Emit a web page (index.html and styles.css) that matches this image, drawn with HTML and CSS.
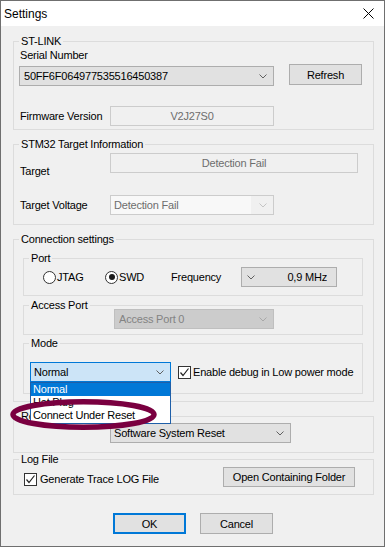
FILE: index.html
```html
<!DOCTYPE html>
<html lang="en">
<head>
  <meta charset="UTF-8">
  <title>Settings</title>
  <link rel="stylesheet" href="styles.css">
</head>
<body>
  <div class="window">
    <div class="titlebar">
      <span class="title">Settings</span>
      <svg class="close" width="11" height="11" viewBox="0 0 11 11"><path d="M0.5 0.5 L10.5 10.5 M10.5 0.5 L0.5 10.5" stroke="#000" stroke-width="1" fill="none"/></svg>
    </div>

    <div class="client">
      <!-- ST-LINK -->
      <fieldset class="group stlink">
        <legend>ST-LINK</legend>
        <div class="label serial-label">Serial Number</div>
        <div class="row serial-row">
          <div class="combo serial-combo">
            <span class="combo-text">50FF6F064977535516450387</span>
            <svg class="chev" width="8" height="5" viewBox="0 0 8 5"><polyline points="0.5,0.5 4,4 7.5,0.5" fill="none" stroke="currentColor"/></svg>
          </div>
          <button class="btn refresh">Refresh</button>
        </div>
        <div class="row fw-row">
          <span class="label field-label">Firmware Version</span>
          <div class="field fw-field">V2J27S0</div>
        </div>
      </fieldset>

      <!-- Target info -->
      <fieldset class="group stm">
        <legend>STM32 Target Information</legend>
        <div class="row target-row">
          <span class="label field-label target-label">Target</span>
          <div class="field target-field">Detection Fail</div>
        </div>
        <div class="row volt-row">
          <span class="label field-label">Target Voltage</span>
          <div class="combo volt-combo">
            <span class="combo-text">Detection Fail</span>
            <svg class="chev" width="8" height="5" viewBox="0 0 8 5"><polyline points="0.5,0.5 4,4 7.5,0.5" fill="none" stroke="currentColor"/></svg>
          </div>
        </div>
      </fieldset>

      <!-- Connection settings -->
      <fieldset class="group conn">
        <legend>Connection settings</legend>

        <fieldset class="group port">
          <legend>Port</legend>
          <div class="row port-row">
            <div class="radio radio-jtag"><span class="circle"></span><span>JTAG</span></div>
            <div class="radio radio-swd"><span class="circle on"></span><span>SWD</span></div>
            <span class="freq-label">Frequency</span>
            <div class="combo freq-combo">
              <svg class="chev" width="8" height="5" viewBox="0 0 8 5"><polyline points="0.5,0.5 4,4 7.5,0.5" fill="none" stroke="currentColor"/></svg>
              <span class="combo-text freq-text">0,9 MHz</span>
            </div>
          </div>
        </fieldset>

        <fieldset class="group access">
          <legend>Access Port</legend>
          <div class="combo access-combo">
            <span class="combo-text">Access Port 0</span>
            <svg class="chev" width="8" height="5" viewBox="0 0 8 5"><polyline points="0.5,0.5 4,4 7.5,0.5" fill="none" stroke="currentColor"/></svg>
          </div>
        </fieldset>

        <fieldset class="group mode">
          <legend>Mode</legend>
          <div class="row mode-row">
            <div class="mode-wrap">
              <div class="combo mode-combo">
                <span class="combo-text">Normal</span>
                <svg class="chev" width="8" height="5" viewBox="0 0 8 5"><polyline points="0.5,0.5 4,4 7.5,0.5" fill="none" stroke="currentColor"/></svg>
              </div>
              <div class="mode-list">
                <div class="item selected">Normal</div>
                <div class="item">Hot Plug</div>
                <div class="item">Connect Under Reset</div>
              </div>
            </div>
            <span class="check mode-check">
              <svg width="11" height="11" viewBox="0 0 11 11"><polyline points="1.5,5.5 4,8.5 9.5,1.5" fill="none" stroke="#222" stroke-width="1.2"/></svg>
            </span>
            <span class="check-text">Enable debug in Low power mode</span>
          </div>
        </fieldset>
      </fieldset>

      <!-- Reset mode -->
      <fieldset class="group reset">
        <legend>Reset mode</legend>
        <div class="combo reset-combo">
          <span class="combo-text">Software System Reset</span>
          <svg class="chev" width="8" height="5" viewBox="0 0 8 5"><polyline points="0.5,0.5 4,4 7.5,0.5" fill="none" stroke="currentColor"/></svg>
        </div>
      </fieldset>

      <!-- Log file -->
      <fieldset class="group log">
        <legend>Log File</legend>
        <div class="row log-row">
          <span class="check log-check">
            <svg width="11" height="11" viewBox="0 0 11 11"><polyline points="1.5,5.5 4,8.5 9.5,1.5" fill="none" stroke="#222" stroke-width="1.2"/></svg>
          </span>
          <span class="check-text log-text">Generate Trace LOG File</span>
          <button class="btn folder">Open Containing Folder</button>
        </div>
      </fieldset>

      <div class="dialog-buttons">
        <button class="btn btn-ok">OK</button>
        <button class="btn btn-cancel">Cancel</button>
      </div>
    </div>

    <!-- annotation ring -->
    <svg class="ring" width="160" height="40" viewBox="0 0 160 40">
      <ellipse cx="75.5" cy="19.5" rx="70.5" ry="12.8" fill="none" stroke="#7a0040" stroke-width="5.5"/>
    </svg>
  </div>
</body>
</html>
```

FILE: styles.css
```css
body {
  margin: 0;
  font-family: "Liberation Sans", Arial, sans-serif;
  font-size: 11px;
  letter-spacing: -0.2px;
  color: #000;
  background: #fff;
}
.window {
  position: relative;
  width: 385px;
  height: 547px;
  box-sizing: border-box;
  border: 1px solid #6f6f6f;
  background: #f0f0f0;
}
.titlebar {
  height: 25px;
  background: #fff;
  display: flex;
  align-items: center;
  padding-left: 3px;
}
.title {
  font-size: 12px;
  letter-spacing: 0;
}
.close {
  margin-left: auto;
  margin-right: 10px;
}
.client {
  padding: 9px 10px 0 12px;
}

/* group boxes */
.group {
  margin: 0;
  padding: 0;
  border: 1px solid #dcdcdc;
  min-width: 0;
}
.group legend {
  margin-left: 5px;
  padding: 0 2px;
  line-height: 13px;
}
.row {
  display: flex;
  align-items: center;
}
.label, .check-text, .freq-label {
  line-height: 13px;
  white-space: nowrap;
}
.field-label {
  width: 90px;
  flex: none;
}

/* controls */
.combo {
  display: flex;
  align-items: center;
  box-sizing: border-box;
  height: 20px;
  border: 1px solid #adadad;
  background: #e1e1e1;
  padding: 0 6px 0 4px;
  color: #606060;
}
.combo-text {
  flex: 1;
  color: #000;
  white-space: nowrap;
  overflow: hidden;
}
.chev {
  flex: none;
}
.field {
  box-sizing: border-box;
  height: 20px;
  border: 1px solid #cccccc;
  background: #f0f0f0;
  color: #6d6d6d;
  text-align: center;
  line-height: 18px;
}
.btn {
  box-sizing: border-box;
  font: inherit;
  letter-spacing: inherit;
  color: #000;
  background: #e1e1e1;
  border: 1px solid #adadad;
  padding: 0;
  height: 20px;
}
.check {
  display: flex;
  align-items: center;
  justify-content: center;
  box-sizing: border-box;
  width: 13px;
  height: 13px;
  border: 1px solid #333;
  background: #fff;
  flex: none;
}

/* ST-LINK */
.stlink {
  padding-bottom: 3px;
}
.serial-label {
  margin: 1px 0 0 6px;
}
.serial-row {
  margin: 4px 0 0 5px;
  align-items: flex-start;
}
.serial-combo {
  width: 255px;
}
.refresh {
  width: 73px;
  height: 21px;
  margin: -2px 0 0 15px;
}
.fw-row {
  margin: 20px 0 0 6px;
}
.fw-field {
  width: 164px;
}

/* target info */
.stm {
  margin-top: 8px;
  padding-bottom: 9px;
}
.target-row {
  margin: 2px 0 0 6px;
  height: 20px;
  align-items: flex-start;
}
.target-label {
  margin-top: 12px;
}
.target-field {
  width: 248px;
}
.volt-row {
  margin: 22px 0 0 6px;
}
.volt-combo {
  width: 164px;
  border-color: #cccccc;
  background: #f0f0f0;
  padding: 0 6px 0 0;
  color: #c4c4c4;
}
.volt-combo .combo-text {
  align-self: stretch;
  line-height: 18px;
  background: #f8f8f8;
  color: #6d6d6d;
  padding-left: 3px;
  margin-right: 8px;
}

/* connection */
.conn {
  margin-top: 8px;
  padding-bottom: 7px;
}
.port {
  margin: 6px 10px 0 9px;
  padding-bottom: 8px;
}
.port-row {
  margin-top: 2px;
  height: 20px;
  padding-left: 19px;
}
.radio {
  display: flex;
  align-items: center;
  flex: none;
}
.radio-jtag {
  width: 62px;
}
.radio-swd {
  width: 66px;
}
.circle {
  display: flex;
  align-items: center;
  justify-content: center;
  box-sizing: border-box;
  width: 13px;
  height: 13px;
  border: 1px solid #333;
  border-radius: 50%;
  background: #fff;
  margin-right: 1px;
}
.circle.on::after {
  content: "";
  width: 6px;
  height: 6px;
  border-radius: 50%;
  background: #1a1a1a;
}
.freq-label {
  width: 70px;
  flex: none;
}
.freq-combo {
  width: 96px;
  padding: 0 9px 0 5px;
}
.freq-text {
  text-align: right;
}
.access {
  margin: 3px 10px 0 9px;
  padding-bottom: 5px;
}
.access-combo {
  margin: -3px 0 0 90px;
  width: 160px;
  background: #cccccc;
  border-color: #bfbfbf;
  color: #a8a8a8;
}
.access-combo .combo-text {
  color: #838383;
}
.mode {
  margin: 2px 10px 0 9px;
  padding-bottom: 11px;
}
.mode-row {
  margin: 12px 0 0 6px;
}
.mode-wrap {
  position: relative;
}
.mode-combo {
  width: 141px;
  background: #cce4f7;
  border-color: #0078d7;
  padding-left: 3px;
}
.mode-list {
  position: absolute;
  left: 0;
  top: 20px;
  z-index: 2;
  width: 141px;
  box-sizing: border-box;
  border: 1px solid #1f5fa8;
  padding-bottom: 1px;
  background: #fff;
}
.mode-list .item {
  line-height: 13px;
  padding-left: 2px;
  white-space: nowrap;
}
.mode-list .selected {
  background: #0078d7;
  color: #fff;
}
.mode-check {
  margin-left: 7px;
}
.check-text {
  margin-left: 2px;
}

/* reset */
.reset {
  margin-top: 8px;
  padding-bottom: 9px;
}
.reset-combo {
  margin-left: 96px;
  width: 181px;
  padding-left: 3px;
}

/* log */
.log {
  padding-bottom: 7px;
}
.log-row {
  margin-top: 1px;
  align-items: flex-start;
}
.log-check {
  margin: 6px 0 0 10px;
}
.log-text {
  margin: 6px 0 0 3px;
}
.folder {
  width: 132px;
  margin-left: auto;
  margin-right: 18px;
}

/* bottom buttons */
.dialog-buttons {
  display: flex;
  gap: 14px;
  margin-top: 18px;
  padding-left: 100px;
}
.btn-ok, .btn-cancel {
  width: 73px;
  height: 21px;
}
.btn-ok {
  border: 2px solid #0078d7;
}

.ring {
  position: absolute;
  left: 7px;
  top: 394px;
  z-index: 3;
}
```
